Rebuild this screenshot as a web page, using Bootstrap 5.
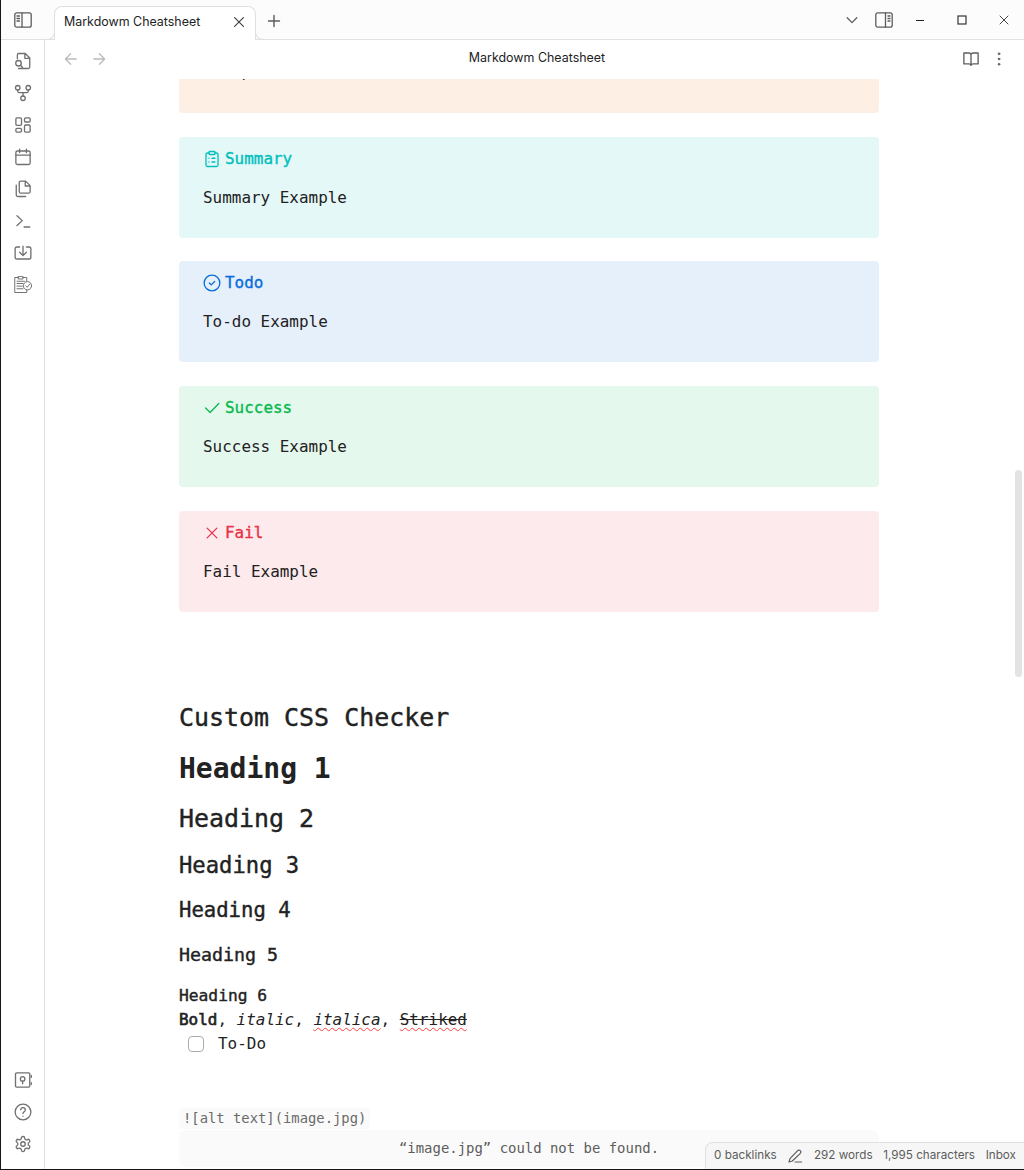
<!DOCTYPE html>
<html lang="en">
<head>
<meta charset="utf-8">
<title>Markdowm Cheatsheet</title>
<link href="https://cdn.jsdelivr.net/npm/bootstrap@5.3.0/dist/css/bootstrap.min.css" rel="stylesheet">
<style>
body{font-family:Inter,"Noto Sans",sans-serif;color:#222;background:#fff;height:1170px;overflow:hidden;border-left:1px solid #11191c;border-bottom:1px solid #161616;font-size:12.45px}
svg{display:block;flex:none;fill:none;stroke:currentColor;stroke-width:1.75;stroke-linecap:round;stroke-linejoin:round;width:18px;height:18px}
.titlebar{height:40px;background:#fcfcfc;border-bottom:1px solid #e0e0e0;color:#5c5c5c;padding-left:13px}
.tab-active{width:202px;height:34px;margin:6px 0 -1px 22px;background:#fff;border:1px solid #e0e0e0;border-bottom:0;border-radius:8px 8px 0 0;padding:0 8px 3px 9px;color:#222;position:relative}
.tab-active::before,.tab-active::after{content:"";position:absolute;bottom:0;width:8px;height:8px;border-bottom:1px solid #e0e0e0;background:#fcfcfc}
.tab-active::before{left:-8px;border-right:1px solid #e0e0e0;border-bottom-right-radius:8px}
.tab-active::after{right:-8px;border-left:1px solid #e0e0e0;border-bottom-left-radius:8px}
.win-controls{padding-right:11px}
.ribbon{width:44px;border-right:1px solid #e0e0e0;color:#707070;padding:12px 0 16px}
.ribbon .tools{gap:14px}
.viewhead{height:39px;padding:0 17px 2px 17px}
.viewhead>div{flex:1 1 0}
.faded{color:#bbb}
.doc{font-family:"DejaVu Sans Mono","Liberation Mono",monospace;font-size:15.95px;width:700px;margin-left:134px;line-height:24px}
.callout{height:100.8px;margin-bottom:23.87px;border-radius:4px;padding:10px 24px}
.callout.cut{height:34px;margin-bottom:23.8px;border-radius:0 0 4px 4px;padding:0 24px;background:#fdefe3;overflow:hidden}
.cut p{margin:0;margin-top:-19px}
.callout .ttl{height:24px;gap:4px;-webkit-text-stroke:.35px currentColor}
.ttl svg{stroke-width:1.75}
.callout p{margin:0}
.callout.cut p{margin-top:-19px}
.callout:not(.cut) p{margin-top:15px}
.c-sum{background:#e5f8f8}.c-sum .ttl{color:#00bfbc}
.c-todo{background:#e6f0fb}.c-todo .ttl{color:#086ddd}
.c-ok{background:#e5f8ed}.c-ok .ttl{color:#08b94e}
.c-fail{background:#fdeaec}.c-fail .ttl{color:#e93147}
.hd{margin:0;font-weight:400;-webkit-text-stroke:.4px currentColor;white-space:pre}
.hd1{font-weight:700;-webkit-text-stroke:0}
.strong-run{-webkit-text-stroke:.65px currentColor}
.spell{text-decoration:underline wavy #ff4040 1px;text-underline-offset:2px;text-decoration-skip-ink:none}
.todo-box{width:16px;height:16px;border:1px solid #ababab;border-radius:4px;margin:0 14px 0 9px}
.code-chip{font-size:13.85px;line-height:21px;color:#6a6a6a;background:#fafafa;border-radius:4px;padding:0 4px}
.missing{height:37px;background:#fafafa;border-radius:8px;font-size:13.95px;color:#5c5c5c;line-height:37px}
.thumb{position:absolute;right:2px;top:470px;width:7px;height:207px;border-radius:4px;background:#e3e3e3}
.statusbar{position:absolute;right:0;bottom:0;width:319px;height:27px;background:#f6f6f6;border:1px solid #e0e0e0;border-width:1px 0 0 1px;border-top-left-radius:8px;font-size:11.7px;color:#5c5c5c;padding:0 8px 0 8px;white-space:nowrap}
</style>
</head>
<body class="d-flex flex-column position-relative">
<header class="titlebar d-flex flex-shrink-0">
  <svg class="align-self-center" viewBox="0 0 18 16" style="height:16px"><g stroke-width="1.3"><rect x=".8" y=".8" width="16.4" height="14.4" rx="2"/><path d="M8 1v14M3 4h2.5M3 6.5h2.5M3 9h2.5"/></g></svg>
  <div class="tab-active d-flex align-items-center justify-content-between"><span>Markdowm Cheatsheet</span>
    <svg viewBox="0 0 16 16" style="width:16px;height:16px"><path stroke="#444" stroke-width="1.2" d="M3.6 3.6l8.8 8.800M12.400 3.600l-8.800 8.800"/></svg></div>
  <svg class="align-self-center" viewBox="0 0 18 18" style="margin:2px 0 0 9px"><path stroke-width="1.4" d="M9 3.5v11M3.5 9h11"/></svg>
  <div class="win-controls d-flex align-items-center ms-auto">
    <svg viewBox="0 0 18 18" style="margin-right:14px"><path stroke-width="1.3" d="M4.2 6.8L9 11.6l4.800-4.800"/></svg>
    <svg viewBox="0 0 18 16" style="height:16px;margin-right:22px"><g stroke-width="1.3"><rect x=".8" y=".8" width="16.400" height="14.400" rx="2"/><path d="M10.500 1v14M13 4h2M13 6.500h2M13 9h2"/></g></svg>
    <svg viewBox="0 0 10 10" style="width:10px;height:10px;margin-right:32px"><path stroke="#222" stroke-width="1" stroke-linecap="butt" d="M1 5.500h8"/></svg>
    <svg viewBox="0 0 10 10" style="width:10px;height:10px;margin-right:32px"><rect x="1" y="1" width="8" height="8" stroke="#222" stroke-width="1.100" stroke-linejoin="miter"/></svg>
    <svg viewBox="0 0 10 10" style="width:10px;height:10px;margin-right:4px"><path stroke="#444" stroke-width="1" d="M1 1l8 8M9 1L1 9"/></svg>
  </div>
</header>
<div class="d-flex flex-grow-1" style="min-height:0">
  <nav class="ribbon d-flex flex-column justify-content-between align-items-center flex-shrink-0">
    <div class="tools d-flex flex-column">
      <svg viewBox="0 0 24 24"><path d="M4.500 9V4a2 2 0 0 1 2-2H15l6 6v12a2 2 0 0 1-2 2H6M14.500 2v6.500H21M9 18l2.300 2.300"/><circle cx="6" cy="15" r="3.700"/></svg>
      <svg viewBox="0 0 24 24"><circle cx="12" cy="19" r="3"/><circle cx="5" cy="5" r="3"/><circle cx="19" cy="5" r="3"/><path d="M5 8v1.500a2 2 0 0 0 2 2h10a2 2 0 0 0 2-2V8M12 11.500V16"/></svg>
      <svg viewBox="0 0 24 24"><rect x="2.500" y="2.500" width="7.500" height="10" rx="1.500"/><rect x="14" y="2.500" width="7.500" height="5.500" rx="1.500"/><rect x="14" y="12" width="7.500" height="9.500" rx="1.500"/><rect x="2.500" y="16.500" width="7.500" height="5" rx="1.500"/></svg>
      <svg viewBox="0 0 24 24"><rect x="2.500" y="4" width="19" height="18" rx="2"/><path d="M7.500 1.500V6M16.500 1.500V6M2.500 9.500h19"/></svg>
      <svg viewBox="0 0 24 24"><path d="M15.500 1.500H9a2 2 0 0 0-2 2v12a2 2 0 0 0 2 2h10.500a2 2 0 0 0 2-2v-8zM15 2v6h6M3 7v13a2 2 0 0 0 2 2h10.500"/></svg>
      <svg viewBox="0 0 24 24"><path d="M4 18l7-6.500L4 5M13.500 20H21"/></svg>
      <svg viewBox="0 0 24 24"><path d="M7.500 4H4a2.500 2.500 0 0 0-2.500 2.500v11A2.500 2.500 0 0 0 4 20h16a2.500 2.500 0 0 0 2.500-2.500v-11A2.500 2.500 0 0 0 20 4h-3.500M12 3v12M7.500 11l4.500 4.500 4.500-4.500"/></svg>
      <svg viewBox="0 1 24 24"><g stroke-width="1.300"><path d="M6 3H1v20h16v-3M12 3h5v5M6 1.500h6v3.500H6zM4 8h10M4 11h8M4 14.500h7M4 18h8"/><circle cx="18" cy="14" r="5.500"/><path d="M15.500 14l2 2 3.500-4"/></g></svg>
    </div>
    <div class="tools d-flex flex-column">
      <svg viewBox="0 0 24 24"><rect x="2" y="2.500" width="19" height="19" rx="1.500"/><circle cx="11.500" cy="10.500" r="3"/><path d="M11.500 13.500V17M23 6v2.500M23 15.500V18"/></svg>
      <svg viewBox="0 0 24 24"><circle cx="12" cy="12" r="10.500"/><path d="M9 9a3 3 0 0 1 6 .5c0 2-3 2.500-3 4.500M12 17.500v.1"/></svg>
      <svg viewBox="0 0 24 24"><path d="M12.220 2h-.440a2 2 0 0 0-2 2v.180a2 2 0 0 1-1 1.730l-.430.250a2 2 0 0 1-2 0l-.150-.080a2 2 0 0 0-2.730.730l-.220.380a2 2 0 0 0 .730 2.730l.150.100a2 2 0 0 1 1 1.720v.510a2 2 0 0 1-1 1.740l-.150.090a2 2 0 0 0-.730 2.730l.220.380a2 2 0 0 0 2.730.730l.150-.080a2 2 0 0 1 2 0l.430.250a2 2 0 0 1 1 1.730V20a2 2 0 0 0 2 2h.440a2 2 0 0 0 2-2v-.180a2 2 0 0 1 1-1.730l.430-.250a2 2 0 0 1 2 0l.150.080a2 2 0 0 0 2.730-.730l.220-.390a2 2 0 0 0-.730-2.730l-.150-.080a2 2 0 0 1-1-1.740v-.500a2 2 0 0 1 1-1.740l.150-.090a2 2 0 0 0 .730-2.730l-.220-.380a2 2 0 0 0-2.730-.730l-.150.080a2 2 0 0 1-2 0l-.430-.250a2 2 0 0 1-1-1.730V4a2 2 0 0 0-2-2z"/><circle cx="12" cy="12" r="3"/></svg>
    </div>
  </nav>
  <main class="flex-grow-1 overflow-hidden">
    <div class="viewhead d-flex align-items-center">
      <div class="faded d-flex" style="gap:10px"><svg viewBox="0 0 24 24"><path d="M19 12H5M11.500 19l-7-7 7-7"/></svg><svg viewBox="0 0 24 24"><path d="M5 12h14M12.500 5l7 7-7 7"/></svg></div>
      <span style="margin:-1px -2px 0 2px">Markdowm Cheatsheet</span>
      <div class="d-flex justify-content-end" style="gap:10px;color:#5c5c5c;margin-right:-1px"><svg viewBox="0 0 24 24"><path d="M12 5.500v15M2.500 4H9a3 3 0 0 1 3 2 3 3 0 0 1 3-2h6.500v14.500H15a3 3 0 0 0-3 2 3 3 0 0 0-3-2H2.500z"/></svg><svg viewBox="0 0 24 24"><g fill="currentColor" stroke-width="1"><circle cx="12" cy="5" r="1.200"/><circle cx="12" cy="12" r="1.200"/><circle cx="12" cy="19" r="1.200"/></g></svg></div>
    </div>
    <article class="doc">
      <div class="callout cut"><p>Example: FAQ</p></div>
      <section class="callout c-sum"><div class="ttl d-flex align-items-center"><svg viewBox="0 0 24 24"><rect x="8" y="2" width="8" height="4" rx="1"/><path d="M16 4h2a2 2 0 0 1 2 2v14a2 2 0 0 1-2 2H6a2 2 0 0 1-2-2V6a2 2 0 0 1 2-2h2M12 11h4M12 16h4M8 11h.01M8 16h.01"/></svg>Summary</div><p>Summary Example</p></section>
      <section class="callout c-todo"><div class="ttl d-flex align-items-center"><svg viewBox="0 0 24 24"><circle cx="12" cy="12" r="10.500"/><path d="M8.500 12l2.500 2.500 4.500-4.500"/></svg>Todo</div><p>To-do Example</p></section>
      <section class="callout c-ok"><div class="ttl d-flex align-items-center"><svg viewBox="0 0 24 24"><path d="M21 6L9.500 18 3.500 12"/></svg>Success</div><p>Success Example</p></section>
      <section class="callout c-fail"><div class="ttl d-flex align-items-center"><svg viewBox="0 0 24 24"><path d="M18.500 5.500L5.500 18.500M5.500 5.500l13 13"/></svg>Fail</div><p>Fail Example</p></section>
      <h2 class="hd" style="font-size:24.950px;line-height:34px;margin-top:89px">Custom CSS Checker</h2>
      <h1 class="hd hd1" style="font-size:28px;line-height:34px;margin-top:17px">Heading 1</h1>
      <h2 class="hd" style="font-size:24.950px;line-height:34px;margin-top:16px">Heading 2</h2>
      <h3 class="hd" style="font-size:22.200px;line-height:30px;margin-top:14px">Heading 3</h3>
      <h4 class="hd" style="font-size:20.600px;line-height:28px;margin-top:16px">Heading 4</h4>
      <h5 class="hd" style="font-size:18.300px;line-height:26px;margin-top:18px">Heading 5</h5>
      <h6 class="hd" style="font-size:16.250px;line-height:24px;margin-top:16px">Heading 6</h6>
      <div><span class="strong-run">Bold</span>, <em>italic</em>, <em class="spell">italica</em>, <span class="spell"><s>Striked</s></span></div>
      <div class="d-flex align-items-center" style="height:25px"><span class="todo-box"></span>To-Do</div>
      <div class="d-flex" style="margin-top:51px"><span class="code-chip">![alt text](image.jpg)</span></div>
      <div class="missing text-center" style="margin-top:1px">“image.jpg” could not be found.</div>
    </article>
  </main>
</div>
<div class="thumb"></div>
<footer class="statusbar d-flex align-items-center justify-content-between"><span>0 backlinks</span><svg viewBox="0 0 24 24" style="width:16px;height:16px"><path d="M12 21h10M3 21l1.500-5L16 4a2.500 2.500 0 0 1 4 4L8 19.500z"/></svg><span>292 words</span><span>1,995 characters</span><span>Inbox</span></footer>
<script src="https://cdn.jsdelivr.net/npm/bootstrap@5.3.0/dist/js/bootstrap.bundle.min.js"></script>
</body>
</html>
